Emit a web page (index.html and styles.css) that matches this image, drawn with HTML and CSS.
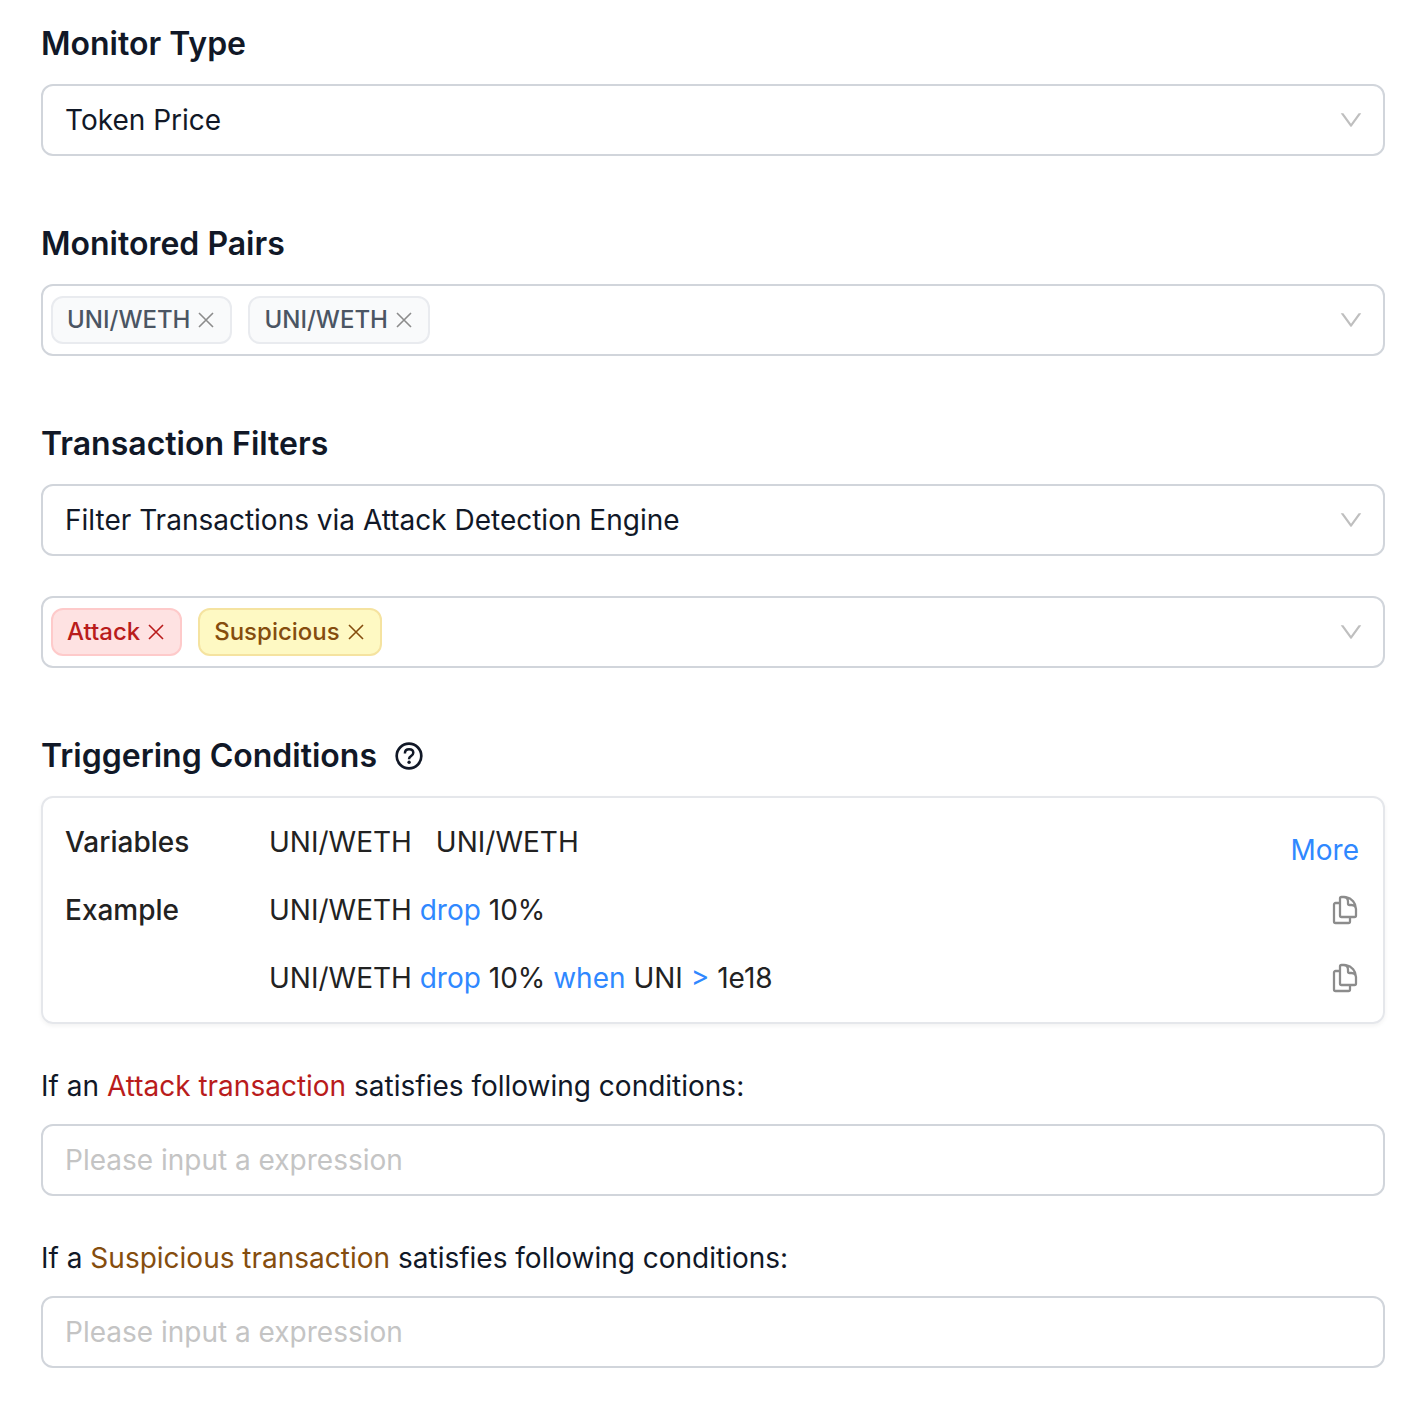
FILE: index.html
```html
<!DOCTYPE html>
<html lang="en">
<head>
<meta charset="utf-8">
<meta name="viewport" content="width=device-width, initial-scale=1">
<title>Monitor settings</title>
<link rel="stylesheet" href="styles.css">
</head>
<body>
<svg class="sprite" aria-hidden="true">
  <symbol id="chevron" viewBox="64 64 896 896"><path d="M884 256h-75c-5.100 0-9.900 2.500-12.900 6.600L512 654.200 227.900 262.600c-3-4.100-7.800-6.600-12.900-6.600h-75c-6.500 0-10.300 7.400-6.500 12.700l352.600 486.100c12.800 17.600 39 17.600 51.700 0l352.600-486.100c3.900-5.300.1-12.700-6.400-12.700z"/></symbol>
  <symbol id="close" viewBox="0 0 20 20"><path d="M3 3l14 14M17 3l-14 14" fill="none" stroke="currentColor" stroke-width="1.600"/></symbol>
  <symbol id="copy" viewBox="0 0 24 24"><path fill="none" stroke="currentColor" stroke-width="1.700" stroke-linecap="round" stroke-linejoin="round" d="M15.750 17.250v3.375c0 .621-.504 1.125-1.125 1.125h-9.750a1.125 1.125 0 0 1-1.125-1.125V7.875c0-.621.504-1.125 1.125-1.125H6.750a9.060 9.060 0 0 1 1.500.124m7.500 10.376h3.375c.621 0 1.125-.504 1.125-1.125V11.250c0-4.460-3.243-8.161-7.500-8.876a9.060 9.060 0 0 0-1.500-.124H9.375c-.621 0-1.125.504-1.125 1.125v3.500m7.500 10.375H9.375a1.125 1.125 0 0 1-1.125-1.125v-9.250m12 6.625v-1.875a3.375 3.375 0 0 0-3.375-3.375h-1.500a1.125 1.125 0 0 1-1.125-1.125v-1.500a3.375 3.375 0 0 0-3.375-3.375H9.750"/></symbol>
</svg>
<form class="form">
  <section class="section">
    <h2 class="title"><label for="type">Monitor Type</label></h2>
    <div class="control">
      <select class="select" id="type"><option>Token Price</option></select>
      <svg class="chevron" aria-hidden="true"><use href="#chevron"/></svg>
    </div>
  </section>

  <section class="section">
    <h2 class="title"><label for="pairs">Monitored Pairs</label></h2>
    <div class="control tags">
      <span class="tag">UNI/WETH<button class="remove" type="button" aria-label="Remove UNI/WETH"><svg><use href="#close"/></svg></button></span>
      <span class="tag">UNI/WETH<button class="remove" type="button" aria-label="Remove UNI/WETH"><svg><use href="#close"/></svg></button></span>
      <input class="search" id="pairs" type="text">
      <svg class="chevron" aria-hidden="true"><use href="#chevron"/></svg>
    </div>
  </section>

  <section class="section">
    <h2 class="title"><label for="filters">Transaction Filters</label></h2>
    <div class="control">
      <select class="select" id="filters"><option>Filter Transactions via Attack Detection Engine</option></select>
      <svg class="chevron" aria-hidden="true"><use href="#chevron"/></svg>
    </div>
    <div class="control tags spaced">
      <span class="tag attack">Attack<button class="remove" type="button" aria-label="Remove Attack"><svg><use href="#close"/></svg></button></span>
      <span class="tag suspicious">Suspicious<button class="remove" type="button" aria-label="Remove Suspicious"><svg><use href="#close"/></svg></button></span>
      <input class="search" type="text" aria-label="Transaction labels">
      <svg class="chevron" aria-hidden="true"><use href="#chevron"/></svg>
    </div>
  </section>

  <section class="section">
    <h2 class="title">Triggering Conditions
      <button class="help" type="button" aria-label="Help"><svg viewBox="0 0 28 28" aria-hidden="true"><circle cx="14" cy="14" r="12.300" fill="none" stroke="currentColor" stroke-width="2.700"/><path d="M9.900 11.400c0-2.500 1.800-4.100 4.200-4.100 2.500 0 4.200 1.500 4.200 3.500 0 1.600-.9 2.500-2.300 3.300-1.400.8-1.900 1.400-1.900 2.700v.5" fill="none" stroke="currentColor" stroke-width="2.500"/><circle cx="14.100" cy="20.200" r="1.700" fill="currentColor"/></svg></button>
    </h2>
    <div class="card">
      <div class="row">
        <span class="name">Variables</span>
        <div class="value variables"><span>UNI/WETH</span><span>UNI/WETH</span></div>
        <button class="more" type="button">More</button>
      </div>
      <div class="row">
        <span class="name">Example</span>
        <div class="value">UNI/WETH <span class="keyword">drop</span> 10%</div>
        <button class="copy" type="button" aria-label="Copy example"><svg><use href="#copy"/></svg></button>
      </div>
      <div class="row">
        <span class="name"></span>
        <div class="value">UNI/WETH <span class="keyword">drop</span> 10% <span class="keyword">when</span> UNI <span class="keyword">&gt;</span> 1e18</div>
        <button class="copy" type="button" aria-label="Copy example"><svg><use href="#copy"/></svg></button>
      </div>
    </div>
    <div class="condition">
      <label class="label" for="attack">If an <span class="attack-text">Attack transaction</span> satisfies following conditions:</label>
      <input class="control expression" id="attack" type="text" placeholder="Please input a expression">
    </div>
    <div class="condition">
      <label class="label" for="suspicious">If a <span class="suspicious-text">Suspicious transaction</span> satisfies following conditions:</label>
      <input class="control expression" id="suspicious" type="text" placeholder="Please input a expression">
    </div>
  </section>
</form>
</body>
</html>
```
FILE: styles.css
```css
* { box-sizing: border-box; }

body {
  margin: 0;
  background: #fff;
  color: #111827;
  font: 400 28px/44px Inter, sans-serif;
}

button, input, select { font: inherit; color: inherit; }

button {
  display: flex;
  padding: 0;
  border: 0;
  background: none;
  cursor: pointer;
}

.sprite { position: absolute; width: 0; height: 0; }

.form {
  display: flex;
  flex-direction: column;
  gap: 64px;
  padding: 20px 43px 40px 41px;
}

.title {
  display: flex;
  align-items: center;
  gap: 18px;
  margin: 0 0 16px;
  font-size: 32px;
  font-weight: 600;
  line-height: 48px;
}

.help svg { width: 28px; height: 28px; }

.control {
  display: flex;
  align-items: center;
  width: 100%;
  height: 72px;
  border: 2px solid #d1d5db;
  border-radius: 12px;
  background: #fff;
}

.select {
  flex: 1;
  align-self: stretch;
  margin-right: -44px;
  padding: 0 44px 0 22px;
  border: 0;
  border-radius: 12px;
  background: none;
  appearance: none;
}

.chevron {
  flex: none;
  width: 24px;
  height: 24px;
  margin-right: 20px;
  fill: #bfbfbf;
  pointer-events: none;
}

.tags { gap: 16px; padding-left: 8px; }
.spaced { margin-top: 40px; }

.tag {
  display: flex;
  align-items: center;
  gap: 6px;
  height: 48px;
  padding: 0 14px;
  border: 2px solid #e9ebef;
  border-radius: 12px;
  background: #f9fafb;
  color: #4b5563;
  font-size: 24px;
  font-weight: 500;
}

.remove { color: #8c8c8c; }
.remove svg { width: 20px; height: 20px; }

.attack { border-color: #fecaca; background: #fee2e2; }
.attack, .attack .remove { color: #b91c1c; }
.suspicious { border-color: #f5e3a0; background: #fef9c3; }
.suspicious, .suspicious .remove { color: #854d0e; }

.search {
  flex: 1;
  min-width: 0;
  border: 0;
  background: none;
}

.card {
  display: flex;
  flex-direction: column;
  gap: 24px;
  padding: 22px;
  border: 2px solid #e5e7eb;
  border-radius: 12px;
  box-shadow: 0 2px 4px rgba(0, 0, 0, 0.05);
  color: #222;
}

.row { display: flex; align-items: flex-start; }
.name { flex: none; width: 204px; font-weight: 500; }
.value { flex: 1; }
.variables { display: flex; gap: 24px; }
.keyword, .more { color: #2f88ff; }
.more { margin: 0 2px -16px 0; line-height: 60px; }
.copy { align-self: center; color: #8c8c8c; }
.copy svg { width: 32px; height: 32px; }

.condition { margin-top: 40px; }
.label { display: block; margin-bottom: 16px; }
.attack-text { color: #b91c1c; }
.suspicious-text { color: #854d0e; }
.expression { padding: 0 22px; }
.expression::placeholder { color: #c4c4c4; opacity: 1; }
```
